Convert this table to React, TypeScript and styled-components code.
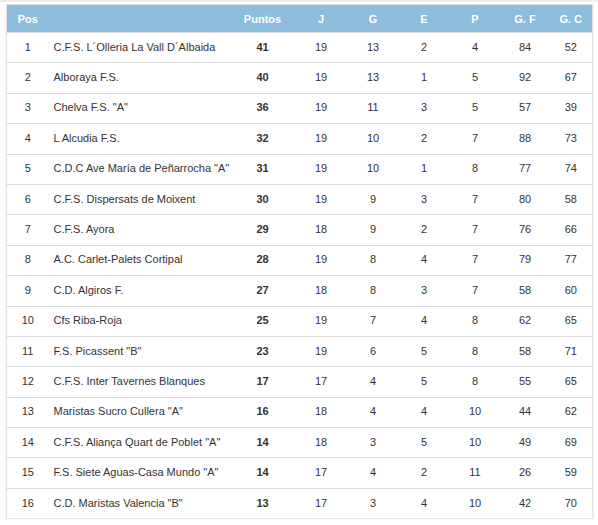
import styled, { createGlobalStyle } from "styled-components";

interface Team {
  pos: number;
  name: string;
  pts: number;
  j: number;
  g: number;
  e: number;
  p: number;
  gf: number;
  gc: number;
}

const teams: Team[] = [
  { pos: 1, name: "C.F.S. L´Olleria La Vall D´Albaida", pts: 41, j: 19, g: 13, e: 2, p: 4, gf: 84, gc: 52 },
  { pos: 2, name: "Alboraya F.S.", pts: 40, j: 19, g: 13, e: 1, p: 5, gf: 92, gc: 67 },
  { pos: 3, name: 'Chelva F.S. "A"', pts: 36, j: 19, g: 11, e: 3, p: 5, gf: 57, gc: 39 },
  { pos: 4, name: "L Alcudia F.S.", pts: 32, j: 19, g: 10, e: 2, p: 7, gf: 88, gc: 73 },
  { pos: 5, name: 'C.D.C Ave María de Peñarrocha "A"', pts: 31, j: 19, g: 10, e: 1, p: 8, gf: 77, gc: 74 },
  { pos: 6, name: "C.F.S. Dispersats de Moixent", pts: 30, j: 19, g: 9, e: 3, p: 7, gf: 80, gc: 58 },
  { pos: 7, name: "C.F.S. Ayora", pts: 29, j: 18, g: 9, e: 2, p: 7, gf: 76, gc: 66 },
  { pos: 8, name: "A.C. Carlet-Palets Cortipal", pts: 28, j: 19, g: 8, e: 4, p: 7, gf: 79, gc: 77 },
  { pos: 9, name: "C.D. Algiros F.", pts: 27, j: 18, g: 8, e: 3, p: 7, gf: 58, gc: 60 },
  { pos: 10, name: "Cfs Riba-Roja", pts: 25, j: 19, g: 7, e: 4, p: 8, gf: 62, gc: 65 },
  { pos: 11, name: 'F.S. Picassent "B"', pts: 23, j: 19, g: 6, e: 5, p: 8, gf: 58, gc: 71 },
  { pos: 12, name: "C.F.S. Inter Tavernes Blanques", pts: 17, j: 17, g: 4, e: 5, p: 8, gf: 55, gc: 65 },
  { pos: 13, name: 'Maristas Sucro Cullera "A"', pts: 16, j: 18, g: 4, e: 4, p: 10, gf: 44, gc: 62 },
  { pos: 14, name: 'C.F.S. Aliança Quart de Poblet "A"', pts: 14, j: 18, g: 3, e: 5, p: 10, gf: 49, gc: 69 },
  { pos: 15, name: 'F.S. Siete Aguas-Casa Mundo "A"', pts: 14, j: 17, g: 4, e: 2, p: 11, gf: 26, gc: 59 },
  { pos: 16, name: 'C.D. Maristas Valencia "B"', pts: 13, j: 17, g: 3, e: 4, p: 10, gf: 42, gc: 70 },
];

const App = () => {
  return (
    <>
      <GlobalStyle />
      <Wrapper>
        <Table>
          <colgroup>
            <col style={{ width: 42 }} />
            <col style={{ width: 182 }} />
            <col style={{ width: 64 }} />
            <col style={{ width: 53 }} />
            <col style={{ width: 51 }} />
            <col style={{ width: 51 }} />
            <col style={{ width: 51 }} />
            <col style={{ width: 49 }} />
            <col />
          </colgroup>
          <thead>
            <tr>
              <Th>Pos</Th>
              <Th $align="left"></Th>
              <Th>Puntos</Th>
              <Th>J</Th>
              <Th>G</Th>
              <Th>E</Th>
              <Th>P</Th>
              <Th>G. F</Th>
              <Th>G. C</Th>
            </tr>
          </thead>
          <tbody>
            {teams.map((t) => (
              <Row key={t.pos}>
                <Td>{t.pos}</Td>
                <Td $align="left">{t.name}</Td>
                <Td $bold>{t.pts}</Td>
                <Td>{t.j}</Td>
                <Td>{t.g}</Td>
                <Td>{t.e}</Td>
                <Td>{t.p}</Td>
                <Td>{t.gf}</Td>
                <Td>{t.gc}</Td>
              </Row>
            ))}
          </tbody>
        </Table>
      </Wrapper>
    </>
  );
};

export default App;

const GlobalStyle = createGlobalStyle`
  body {
    margin: 0;
    background: #fff;
    font-family: "Liberation Sans", Arial, sans-serif;
  }
`;

const Wrapper = styled.div`
  padding: 2px 5px 0 6px;
  border-top: 2px solid #eeeeee;
  width: 598px;
  box-sizing: border-box;
`;

const Table = styled.table`
  width: 587px;
  border-collapse: collapse;
  table-layout: fixed;
  box-shadow: 0 1px 2px rgba(0, 0, 0, 0.12);
  border: 1px solid #e4e4e4;
`;

const Th = styled.th<{ $align?: "left" | "center" }>`
  background: #8dbcdc;
  color: #fff;
  font-size: 11px;
  font-weight: 700;
  height: 27px;
  padding: 0 4px;
  text-align: ${(p) => p.$align || "center"};
`;

const Row = styled.tr`
  border-top: 1px solid #dddddd;
  height: 30.4px;
`;

const Td = styled.td<{ $align?: "left" | "center"; $bold?: boolean }>`
  color: #333;
  font-size: 11px;
  font-weight: ${(p) => (p.$bold ? 700 : 400)};
  padding: 0 4px 2px;
  white-space: nowrap;
  overflow: hidden;
  text-align: ${(p) => p.$align || "center"};
  ${(p) => p.$align === "left" && "padding-left: 5px;"}
`;
